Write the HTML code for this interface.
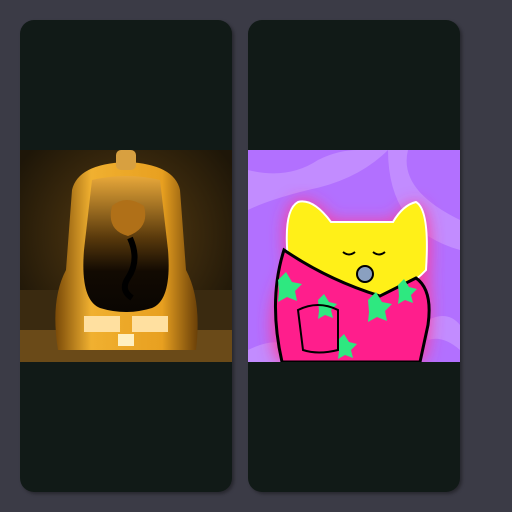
<!DOCTYPE html>
<html><head><style>
body{margin:0;width:512px;height:512px;background:#3b3b46;position:relative;overflow:hidden}
.card{position:absolute;top:20px;width:212px;height:472px;background:#111a17;border-radius:14px;box-shadow:2px 2px 3px rgba(0,0,0,.35);overflow:hidden}
.card svg{position:absolute;left:0;top:130px;width:212px;height:212px}
</style></head><body>
<div class="card" style="left:20px">
<svg viewBox="0 0 212 212">
<defs>
<radialGradient id="g1" cx="50%" cy="40%" r="60%"><stop offset="0" stop-color="#5a3e12"/><stop offset="1" stop-color="#1e1608"/></radialGradient>
<linearGradient id="g2" x1="0" y1="0" x2="1" y2="0"><stop offset="0" stop-color="#7a4a08"/><stop offset=".25" stop-color="#f0b030"/><stop offset=".75" stop-color="#e8a020"/><stop offset="1" stop-color="#6a4008"/></linearGradient>
<linearGradient id="g3" x1="0" y1="0" x2="0" y2="1"><stop offset="0" stop-color="#e8a83a"/><stop offset=".45" stop-color="#5a3a0c"/><stop offset=".7" stop-color="#120a02"/><stop offset="1" stop-color="#0a0602"/></linearGradient>
</defs>
<rect width="212" height="212" fill="url(#g1)"/>
<rect x="0" y="140" width="212" height="72" fill="#3a2a10"/>
<path d="M0 180 L212 180 L212 212 L0 212Z" fill="#6a4a18"/>
<path d="M52 40 Q58 14 106 12 Q154 14 160 40 L166 120 Q182 150 176 200 L38 200 Q30 150 46 120 Z" fill="url(#g2)"/>
<path d="M72 30 Q106 22 140 30 L148 100 Q152 150 132 158 Q106 166 80 158 Q60 150 64 100 Z" fill="url(#g3)"/>
<path d="M92 56 Q106 44 124 56 Q130 78 108 86 Q86 80 92 56Z" fill="#b07018"/>
<path d="M110 88 Q120 110 108 128 Q100 140 112 148" stroke="#000" stroke-width="6" fill="none"/>
<rect x="96" y="0" width="20" height="20" rx="5" fill="#d8a040"/>
<rect x="64" y="166" width="36" height="16" fill="#ffe0a0"/><rect x="112" y="166" width="36" height="16" fill="#ffe0a0"/>
<rect x="98" y="184" width="16" height="12" fill="#fff0c0"/>
</svg>
</div>
<div class="card" style="left:248px">
<svg viewBox="0 0 212 212">
<defs>
<filter id="bl"><feGaussianBlur stdDeviation="8"/></filter>
</defs>
<rect width="212" height="212" fill="#b270ff"/>
<path d="M0 20 Q40 30 70 10 Q90 0 110 0 L140 0 Q110 30 60 40 Q20 50 0 60Z M160 0 Q150 40 212 70 L212 100 Q140 80 140 0Z M0 200 Q40 180 60 212 L0 212Z M180 170 Q200 160 212 175 L212 200 Q195 185 180 190Z" fill="#c28cff"/>
<path d="M40 120 Q30 50 55 50 Q70 52 84 72 L145 72 Q158 52 172 54 Q185 70 180 130 Q185 180 175 212 L30 212 Q15 160 40 120Z" fill="#ff3a9a" filter="url(#bl)"/>
<path d="M40 110 Q35 60 50 52 Q65 48 83 72 L145 72 Q155 55 168 52 Q182 60 178 120 Q150 150 110 145 Q60 140 40 110Z" fill="#fff018" stroke="#fff" stroke-width="2"/>
<path d="M36 100 Q80 130 132 146 L168 128 Q185 140 180 175 L172 212 L34 212 Q20 150 36 100Z" fill="#ff1e8c" stroke="#000" stroke-width="3"/>
<path d="M30 130 l8 -8 l6 10 l10 2 l-7 7 l2 10 l-10 -4 l-9 5 l1 -10 z M120 150 l8 -8 l6 10 l10 2 l-7 7 l2 10 l-10 -4 l-9 5 l1 -10 z M70 150 l6 -6 l5 8 l8 2 l-6 6 l2 8 l-8 -3 l-7 4 l1 -8z M150 135 l6 -6 l5 8 l8 2 l-6 6 l2 8 l-8 -3 l-7 4 l1 -8z M90 190 l6 -6 l5 8 l8 2 l-6 6 l2 8 l-8 -3 l-7 4 l1 -8z" fill="#2ee880"/>
<path d="M50 160 Q70 150 90 160 L90 200 Q70 205 55 200Z" fill="none" stroke="#000" stroke-width="2"/>
<circle cx="117" cy="124" r="8" fill="#8aa0c0" stroke="#000" stroke-width="2"/>
<path d="M95 102 q6 5 12 0 M125 102 q6 5 12 0" stroke="#000" stroke-width="2" fill="none"/>
</svg>
</div>
</body></html>
